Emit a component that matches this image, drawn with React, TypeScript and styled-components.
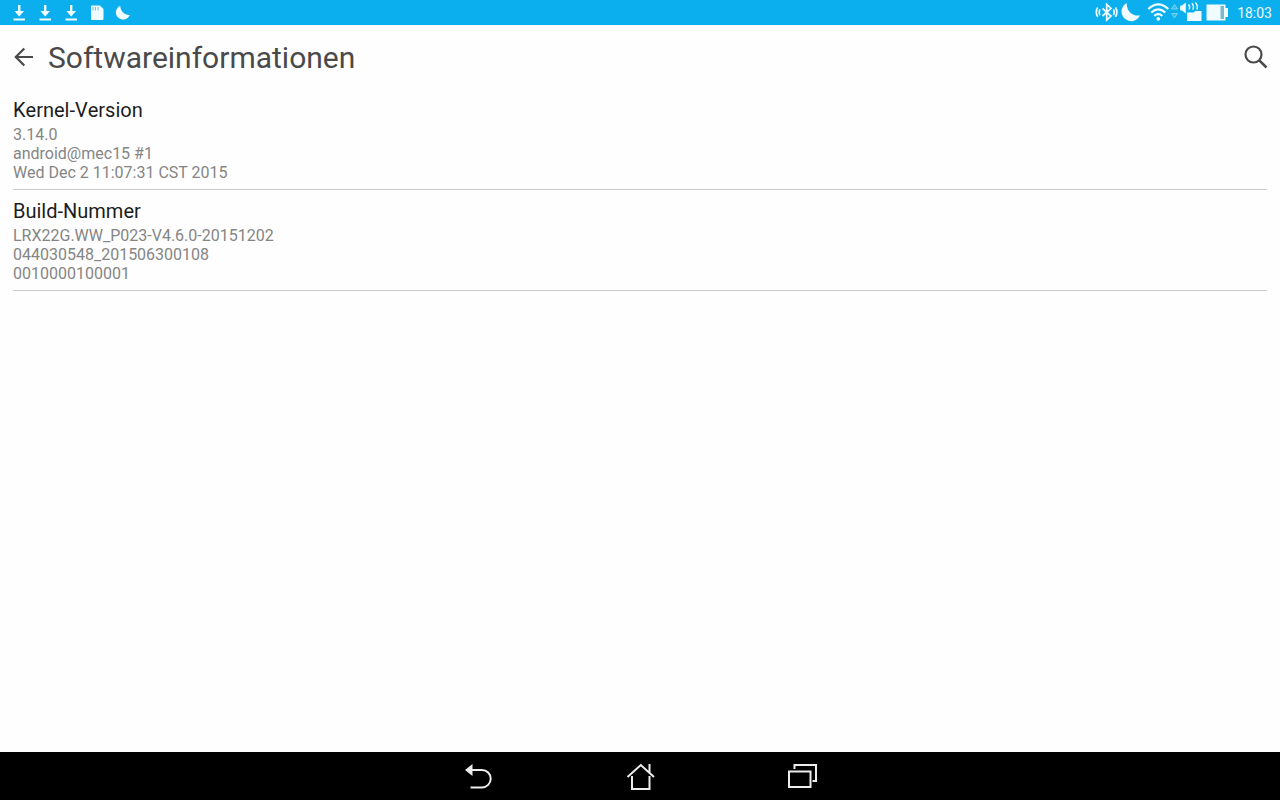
import React from "react";
import styled, { createGlobalStyle } from "styled-components";

const GlobalStyle = createGlobalStyle`
  * { box-sizing: border-box; }
  body {
    margin: 0;
    background: #fefefe;
    font-family: Roboto, "Liberation Sans", sans-serif;
  }
`;

const Screen = styled.div`
  display: flex;
  flex-direction: column;
  min-height: 100vh;
`;

const StatusBar = styled.div`
  display: flex;
  align-items: center;
  justify-content: space-between;
  height: 25px;
  padding: 0 8px 0 6px;
  background: #0bafee;
  color: #f0fcff;
`;

const IconGroup = styled.div<{ $gap: number }>`
  display: flex;
  align-items: center;
  gap: ${(p) => p.$gap}px;
`;

const Icon = styled.svg`
  display: block;
  flex: none;
`;

const Clock = styled.time`
  margin-left: 6px;
  padding-top: 1px;
  font-size: 14px;
  line-height: 25px;
`;

const Header = styled.header`
  display: flex;
  align-items: center;
  height: 64px;
  padding: 0 8px;
  color: #4a4a4a;
`;

const IconButton = styled.button`
  display: flex;
  align-items: center;
  justify-content: center;
  width: 32px;
  height: 48px;
  padding: 0;
  border: 0;
  background: transparent;
  color: inherit;
`;

const Title = styled.h1`
  flex: 1;
  margin: 0;
  padding: 2px 8px 0;
  font-size: 30px;
  font-weight: 400;
  line-height: 36px;
`;

const Content = styled.main`
  flex: 1;
  padding: 0 13px;
`;

const Entry = styled.section`
  padding: 9px 0 7px;
  border-bottom: 1px solid #cccccc;
`;

const EntryTitle = styled.h2`
  margin: 0 0 3px;
  color: #1c1c1c;
  font-size: 20px;
  font-weight: 400;
  font-kerning: none;
  line-height: 24px;
`;

const EntryLine = styled.div`
  color: #858585;
  font-size: 16px;
  line-height: 19px;
`;

const NavBar = styled.nav`
  display: flex;
  justify-content: center;
  height: 48px;
  background: #000000;
  color: #ededed;
`;

const NavButton = styled(IconButton)`
  width: 162px;
`;

const DownloadIcon = () => (
  <Icon width="26" height="25" viewBox="0 0 26 25" fill="currentColor">
    <path d="M12 5h2.400v6H18l-4.800 5.500-4.800-5.500H12z" />
    <path d="M7.500 18.500h11.500v2H7.500z" />
  </Icon>
);

const CardIcon = () => (
  <Icon width="26" height="25" viewBox="0 0 26 25">
    <path d="M8 5.500h8l3.500 3.500v10q0 1-1 1H8q-1 0-1-1V6.500q0-1 1-1z" fill="currentColor" />
    <path d="M9 7v3.500M11.500 7v3.500M14 7v3.500" stroke="#5cc8f0" strokeWidth="1" />
  </Icon>
);

const SmallMoonIcon = () => (
  <Icon width="26" height="25" viewBox="0 0 26 25" fill="currentColor">
    <path d="M10.200 5.800A7.200 7.200 0 1 0 19.800 15C15 15.500 10.500 11.500 10.200 5.800z" />
  </Icon>
);

const BluetoothIcon = () => (
  <Icon width="24" height="25" viewBox="0 0 24 25" fill="none" stroke="currentColor" strokeWidth="1.700">
    <path d="M8.500 8.500l8.500 7.500-4.300 4V4.500l4.300 4-8.500 7.500" />
    <path d="M6 9.300q-1.600 2.900 0 5.800M3.700 7.500q-2.800 4.700 0 9.400M19.400 9.300q1.600 2.900 0 5.800M21.500 7.500q2.800 4.700 0 9.400" />
  </Icon>
);

const MoonIcon = () => (
  <Icon width="22" height="25" viewBox="0 0 22 25" fill="currentColor">
    <path d="M7.800 3A9.600 9.600 0 1 0 21 15.300C14.500 17 7 11 7.800 3z" />
  </Icon>
);

const WifiIcon = () => (
  <Icon width="28" height="25" viewBox="0 0 28 25" fill="none" stroke="currentColor" strokeWidth="2.200">
    <path d="M6.300 9q10-9.200 20 0M9.300 12.500q7-6.200 14 0M12.300 15.800q4-3.400 8 0" />
    <circle cx="16.300" cy="18.800" r="1.900" fill="currentColor" stroke="none" />
  </Icon>
);

const TrafficIcon = () => (
  <Icon width="8" height="25" viewBox="0 0 8 25" fill="#3dbbe9" stroke="#85dbf5" strokeWidth="0.800">
    <path d="M3.500 4.500l3 4.500h-6zM3.500 18l3-4.500h-6z" />
  </Icon>
);

const SoundProfileIcon = () => (
  <Icon width="24" height="25" viewBox="0 0 24 25" fill="currentColor">
    <path d="M0.500 5.500h1.500L5.800 2.500v11L2 10.500h-1.500q-1-2.500 0-5z" />
    <path
      d="M8.500 4.500q2 2.200.600 5M11.800 3.200q2.800 3 1 6.500M15.300 2.500q3.200 3.200 1.500 7"
      fill="none"
      stroke="currentColor"
      strokeWidth="1.400"
    />
    <path d="M7 12.500h7l1-1.500h6.500v10H7z" />
  </Icon>
);

const BatteryIcon = () => (
  <Icon width="25" height="25" viewBox="0 0 25 25">
    <path d="M1.500 4.500H20.500v3.500H23v9h-2.500v3.500H1.500z" fill="currentColor" />
    <path d="M15.500 6h3.500v13h-3.500z" fill="#7bb9cf" />
  </Icon>
);

const BackArrowIcon = () => (
  <Icon width="24" height="24" viewBox="0 0 24 24" fill="none" stroke="currentColor" strokeWidth="2.200">
    <path d="M21 12H4M12.300 3.500L3.800 12l8.500 8.500" />
  </Icon>
);

const SearchIcon = () => (
  <Icon width="28" height="28" viewBox="0 0 28 28" fill="none" stroke="currentColor">
    <circle cx="11.500" cy="11.500" r="8" strokeWidth="2.200" />
    <path d="M17.300 17.300l7.200 7.200" strokeWidth="2.600" />
  </Icon>
);

const BackIcon = () => (
  <Icon width="32" height="32" viewBox="0 0 32 32">
    <path d="M3 10l7.500-6v12z" fill="currentColor" />
    <path
      d="M9 10h11a8.700 8.700 0 0 1 0 17.400H8.500"
      fill="none"
      stroke="currentColor"
      strokeWidth="2"
    />
  </Icon>
);

const HomeIcon = () => (
  <Icon width="32" height="32" viewBox="0 0 32 32" fill="none" stroke="currentColor" strokeWidth="2">
    <path d="M3.500 17L16.800 5l13.200 12M25.500 12.500V4M8 16v13h17.500V16" />
  </Icon>
);

const RecentIcon = () => (
  <Icon width="32" height="32" viewBox="0 0 32 32" fill="none" stroke="currentColor" strokeWidth="2">
    <path d="M3 11.500h21.500V27H3zM8.500 9V5H30v16h-3.500" />
  </Icon>
);

const entries = [
  {
    title: "Kernel-Version",
    lines: ["3.14.0", "android@mec15 #1", "Wed Dec 2 11:07:31 CST 2015"],
  },
  {
    title: "Build-Nummer",
    lines: ["LRX22G.WW_P023-V4.6.0-20151202", "044030548_201506300108", "0010000100001"],
  },
];

export default function App() {
  return (
    <>
      <GlobalStyle />
      <Screen>
        <StatusBar>
          <IconGroup $gap={0}>
            <DownloadIcon />
            <DownloadIcon />
            <DownloadIcon />
            <CardIcon />
            <SmallMoonIcon />
          </IconGroup>
          <IconGroup $gap={1}>
            <BluetoothIcon />
            <MoonIcon />
            <WifiIcon />
            <TrafficIcon />
            <SoundProfileIcon />
            <BatteryIcon />
            <Clock>18:03</Clock>
          </IconGroup>
        </StatusBar>
        <Header>
          <IconButton type="button" aria-label="Zurück">
            <BackArrowIcon />
          </IconButton>
          <Title>Softwareinformationen</Title>
          <IconButton type="button" aria-label="Suchen">
            <SearchIcon />
          </IconButton>
        </Header>
        <Content>
          {entries.map((entry) => (
            <Entry key={entry.title}>
              <EntryTitle>{entry.title}</EntryTitle>
              {entry.lines.map((line) => (
                <EntryLine key={line}>{line}</EntryLine>
              ))}
            </Entry>
          ))}
        </Content>
        <NavBar>
          <NavButton type="button" aria-label="Zurück">
            <BackIcon />
          </NavButton>
          <NavButton type="button" aria-label="Startseite">
            <HomeIcon />
          </NavButton>
          <NavButton type="button" aria-label="Letzte Apps">
            <RecentIcon />
          </NavButton>
        </NavBar>
      </Screen>
    </>
  );
}
